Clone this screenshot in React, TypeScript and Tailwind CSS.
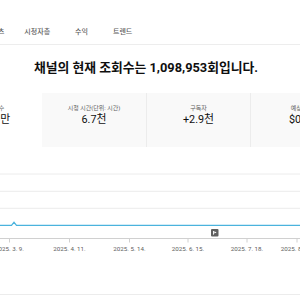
import React from "react";

const FONT = "font-['Roboto','Noto_Sans_CJK_KR',sans-serif]";

const tabs = ["콘텐츠", "시청자층", "수익", "트렌드"];

type Card = { label: string; value: string; selected?: boolean };

const cards: Card[] = [
  { label: "조회수", value: "110만", selected: true },
  { label: "시청 시간(단위: 시간)", value: "6.7천" },
  { label: "구독자", value: "+2.9천" },
  { label: "예상 수익", value: "$0.00" },
];

// 축 라벨 위치
const ticks = [
  { x: 9.5, label: "2025. 3. 9." },
  { x: 69.5, label: "2025. 4. 11." },
  { x: 129.5, label: "2025. 5. 14." },
  { x: 188, label: "2025. 6. 15." },
  { x: 247, label: "2025. 7. 18." },
  { x: 297, label: "2025. 8. 20." },
];

function Chart() {
  return (
    <svg width="300" height="106" viewBox="0 0 300 106" className="block">
      {[27, 44.3, 61.3].map((y) => (
        <line key={y} x1="0" x2="300" y1={y} y2={y} stroke="#ececec" strokeWidth="1" />
      ))}
      <line x1="0" x2="300" y1="91.5" y2="91.5" stroke="#d0d0d0" strokeWidth="1" />
      {ticks.map((t) => (
        <g key={t.label}>
          <line x1={t.x} x2={t.x} y1="91.5" y2="95.5" stroke="#d0d0d0" strokeWidth="1" />
          <text
            x={t.x}
            y="103.5"
            textAnchor="middle"
            fontSize="6.2"
            fill="#606060"
            fontFamily="Roboto, 'Noto Sans CJK KR', sans-serif"
          >
            {t.label}
          </text>
        </g>
      ))}
      <path
        d="M0 78.3 L11.5 78.3 L14 75.3 L16.5 78.3 L300 78.3"
        fill="none"
        stroke="#4bb3dd"
        strokeWidth="1.2"
      />
      {/* 동영상 게시 마커 */}
      <g transform="translate(211 82)">
        <rect x="0" y="0" width="7.5" height="7.5" rx="1" fill="#5f5f5f" />
        <rect x="2" y="2" width="0.9" height="3.6" fill="#fff" />
        <path d="M3.3 2.2 L5.6 3.4 L3.3 4.6 Z" fill="#fff" />
      </g>
    </svg>
  );
}

export default function App() {
  return (
    <div className={`w-[300px] h-[300px] overflow-hidden bg-white ${FONT}`}>
      {/* 탭 */}
      <div className="h-[45px] border-b border-[#ededed] flex items-end pb-[8px]">
        <div className="flex gap-[25px] -ml-[15px] text-[7px] leading-[7px] text-[#606060] font-medium whitespace-nowrap">
          {tabs.map((t, i) => (
            <span key={t} className={i === 0 ? "-mr-[5px]" : ""}>
              {t}
            </span>
          ))}
        </div>
      </div>

      {/* 제목 */}
      <div className="mt-[16px] flex justify-center pr-[8px]">
        <h1 className="text-[12.8px] leading-[14px] font-bold text-[#0f0f0f] whitespace-nowrap">
          채널의 현재 조회수는 1,098,953회입니다.
        </h1>
      </div>

      {/* 카드 */}
      <div className="mt-[18px] flex -ml-[50px] h-[54px]">
        {cards.map((c, i) => (
          <div
            key={c.label}
            className={`${i === 0 ? "w-[92px]" : "w-[104px]"} shrink-0 flex flex-col items-center pt-[11px] ${
              c.selected ? "bg-white" : "bg-[#f9f9f9]"
            } ${i > 1 ? "border-l border-[#ececec]" : ""}`}
          >
            <div className="text-[6px] leading-[8px] text-[#606060] whitespace-nowrap">{c.label}</div>
            <div className="mt-[1px] text-[10.8px] leading-[13px] text-[#0f0f0f] whitespace-nowrap">
              {c.value}
            </div>
          </div>
        ))}
      </div>

      <Chart />

      <div className="mt-[41px] border-b border-[#ececec]" />
    </div>
  );
}
